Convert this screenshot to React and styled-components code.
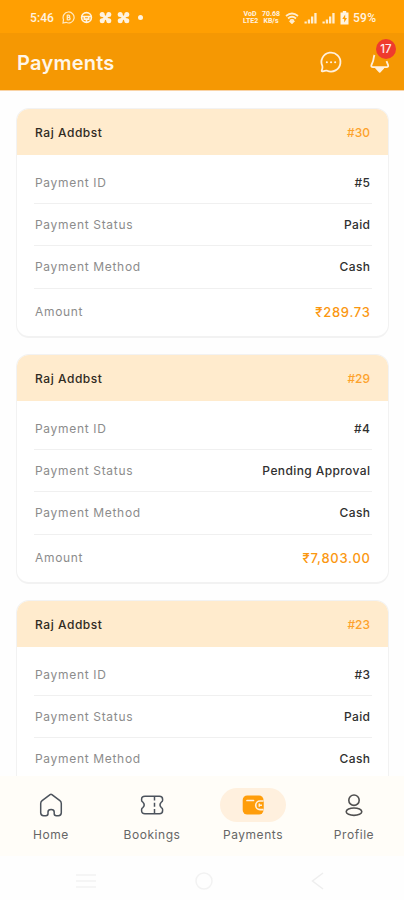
import React from "react";
import styled, { createGlobalStyle } from "styled-components";

const Global = createGlobalStyle`
  * { box-sizing: border-box; }
  body { margin: 0; background: #fefefe; font-family: Inter, "Noto Sans", sans-serif; }
`;

const Screen = styled.div`
  width: 404px;
  height: 900px;
  display: flex;
  flex-direction: column;
  overflow: hidden;
  background: #fefefe;
`;

const StatusBar = styled.div`
  flex: none;
  height: 33px;
  padding: 2px 27px 0 30px;
  display: flex;
  align-items: center;
  justify-content: space-between;
  background: #ff9f02;
  color: #fff3e0;
  font: 500 12px/16px Roboto, sans-serif;
`;

const StatusGroup = styled.div`
  display: flex;
  align-items: center;
  gap: ${(p) => p.$gap}px;
  svg { display: block; flex: none; }
`;

const Clock = styled.span`
  width: 26px;
  letter-spacing: 0.1px;
`;

const Battery = styled.span`
  width: 24px;
  margin-left: -1px;
  letter-spacing: 0.3px;
`;

const TinyStack = styled.span`
  width: ${(p) => p.$width}px;
  font: 700 7px/6.5px Roboto, sans-serif;
  text-align: center;
  white-space: nowrap;
`;

const Dot = styled.i`
  width: 5px;
  height: 5px;
  margin-left: 2px;
  border-radius: 50%;
  background: #fff3e0;
`;

const AppBar = styled.header`
  flex: none;
  height: 58px;
  padding: 1px 12px 0 17px;
  display: flex;
  align-items: center;
  justify-content: space-between;
  background: #f59803;
  border-bottom: 1px solid #f9d3a6;
`;

const Title = styled.h1`
  margin: 2px 0 0;
  color: #fff6e8;
  font-size: 20px;
  line-height: 26px;
  font-weight: 600;
  letter-spacing: 0.25px;
`;

const Actions = styled.div`
  display: flex;
  align-items: center;
  gap: 25px;
  svg { display: block; }
`;

const BellWrap = styled.div`
  position: relative;
  width: 24px;
`;

const CountBadge = styled.span`
  position: absolute;
  top: -11px;
  left: 8px;
  width: 20px;
  height: 20px;
  border-radius: 50%;
  background: #ef3b2d;
  color: #ffeceb;
  font-size: 11.5px;
  line-height: 20px;
  font-weight: 500;
  text-align: center;
`;

const List = styled.main`
  flex: 1;
  min-height: 0;
  overflow: hidden;
  padding: 17px 15px 0 16px;
  display: flex;
  flex-direction: column;
  gap: 16px;
`;

const Card = styled.section`
  flex: none;
  height: 230px;
  border: 1px solid #f2f2f2;
  border-width: 1px 1px 2px;
  border-radius: 13px;
  overflow: hidden;
  background: #fff;
`;

const CardHead = styled.div`
  height: 46px;
  padding: 0 18px;
  display: flex;
  align-items: center;
  justify-content: space-between;
  background: #ffebcd;
`;

const Name = styled.span`
  color: #2f2a22;
  font-size: 12px;
  font-weight: 500;
  letter-spacing: 0.55px;
`;

const Ref = styled.span`
  color: #fda22b;
  font-size: 12px;
  font-weight: 500;
  letter-spacing: 0;
`;

const Rows = styled.div`
  padding: 7px 16px 0 17px;
`;

const Row = styled.div`
  height: ${(p) => (p.$last ? 46 : 42.2)}px;
  padding: 0 2px 0 1px;
  display: flex;
  align-items: center;
  justify-content: space-between;
  border-bottom: ${(p) => (p.$last ? "none" : "1px solid #f0f0f0")};
`;

const Label = styled.span`
  color: #8c8c8c;
  font-size: 12px;
  letter-spacing: 0.68px;
`;

const Value = styled.span`
  color: ${(p) => (p.$amount ? "#fb9710" : "#303030")};
  font-size: ${(p) => (p.$amount ? 13 : 12)}px;
  font-weight: 500;
  letter-spacing: ${(p) => (p.$amount ? 0.75 : 0.4)}px;
  margin-right: ${(p) => (p.$amount ? -0.75 : -0.4)}px;
`;

const BottomNav = styled.nav`
  flex: none;
  height: 80px;
  padding-top: 12px;
  display: grid;
  grid-template-columns: repeat(4, 101px);
  background: #fffdf8;
`;

const NavItem = styled.div`
  display: flex;
  flex-direction: column;
  align-items: center;
  gap: 5px;
  padding-left: 1px;
  color: #666;
  font-size: 12px;
  line-height: 16px;
  letter-spacing: 0.55px;
`;

const NavIcon = styled.span`
  width: 66px;
  height: 34px;
  border-radius: 17px;
  display: grid;
  place-items: center;
  background: ${(p) => (p.$active ? "#fff0de" : "transparent")};
`;

const SystemBar = styled.div`
  flex: none;
  height: 44px;
  padding: 5px 79px 0 76px;
  display: flex;
  align-items: center;
  justify-content: space-between;
  background: #fefefe;
`;

const Clover = () => (
  <svg width="13" height="13" viewBox="0 0 13 13" fill="#fff3e0">
    <circle cx="3.2" cy="3.4" r="2.5" /><circle cx="9.8" cy="3.4" r="2.5" />
    <circle cx="3.2" cy="9.8" r="2.5" /><circle cx="9.8" cy="9.8" r="2.5" />
    <path d="M3 3.5l7 6.5M10 3.5l-7 6.5" stroke="#fff3e0" strokeWidth="3" />
  </svg>
);

const Signal = () => (
  <svg width="13" height="12" viewBox="0 0 13 12" fill="#ffedcf">
    <path d="M.5 9.5h2.300v2H.5zM3.800 7.500h2.300v4H3.800zM7 4.500h2.300v7H7zM10.300 1h2.300v10.500h-2.300z" />
  </svg>
);

const HomeIcon = () => (
  <svg width="24" height="26" viewBox="0 0 24 26" fill="none" stroke="#4c535c" strokeWidth="1.5" strokeLinejoin="round">
    <path d="M11.100 2.700 Q12 2 12.900 2.700 L20.900 8.700 Q22.300 9.800 22.300 11.500 V20.800 Q22.300 23.700 19.400 23.700 H17.300 Q15.200 23.700 15.200 21.800 V20 Q15.200 17.600 12.100 17.600 Q9 17.600 9 20 V21.800 Q9 23.700 6.900 23.700 H4.600 Q1.700 23.700 1.700 20.800 V11.500 Q1.700 9.800 3.100 8.700 Z" />
  </svg>
);

const TicketIcon = () => (
  <svg width="24" height="22" viewBox="0 0 24 22" fill="none" stroke="#4c535c" strokeWidth="1.5" strokeLinejoin="round">
    <path d="M5 2.200 H19.400 Q22.600 2.200 22.600 5.200 V6.200 Q22.600 7.500 21.300 8.200 Q18.700 10.900 21.300 13.600 Q22.600 14.300 22.600 15.600 V16.800 Q22.600 19.800 19.400 19.800 H5 Q1.600 19.800 1.600 16.800 V15.600 Q1.600 14.300 2.900 13.600 Q5.500 10.900 2.900 8.200 Q1.600 7.500 1.600 6.200 V5.200 Q1.600 2.200 5 2.200 Z" />
    <path d="M14.500 2.500v17" strokeDasharray="4 2.300" />
  </svg>
);

const WalletIcon = () => (
  <svg width="22" height="20" viewBox="0 0 22 20">
    <rect x=".7" y=".5" width="20.8" height="19" rx="4.500" fill="#ff9d0a" />
    <path d="M5 5.500h6.500" stroke="#fff0de" strokeWidth="1.700" strokeLinecap="round" />
    <path d="M21.500 6h-3.500a4.300 4.300 0 0 0 0 8.600h3.500" fill="#ff9d0a" stroke="#fff0de" strokeWidth="1.600" />
    <path d="M17.300 8.600v3.200M17.300 10.300h2.700" stroke="#fff0de" strokeWidth="1.500" />
  </svg>
);

const ProfileIcon = () => (
  <svg width="20" height="24" viewBox="0 0 20 24" fill="none" stroke="#505050" strokeWidth="1.600">
    <circle cx="10" cy="7.200" r="5.200" />
    <ellipse cx="10" cy="18.700" rx="7.800" ry="3.700" />
  </svg>
);

const payments = [
  { ref: "#30", id: "#5", status: "Paid", amount: "₹289.73" },
  { ref: "#29", id: "#4", status: "Pending Approval", amount: "₹7,803.00" },
  { ref: "#23", id: "#3", status: "Paid", amount: "" },
];

const tabs = [
  { label: "Home", Icon: HomeIcon },
  { label: "Bookings", Icon: TicketIcon },
  { label: "Payments", Icon: WalletIcon, active: true },
  { label: "Profile", Icon: ProfileIcon },
];

const PaymentCard = ({ payment }) => (
  <Card>
    <CardHead><Name>Raj Addbst</Name><Ref>{payment.ref}</Ref></CardHead>
    <Rows>
      <Row><Label>Payment ID</Label><Value>{payment.id}</Value></Row>
      <Row><Label>Payment Status</Label><Value>{payment.status}</Value></Row>
      <Row><Label>Payment Method</Label><Value>Cash</Value></Row>
      {payment.amount && <Row $last><Label>Amount</Label><Value $amount>{payment.amount}</Value></Row>}
    </Rows>
  </Card>
);

export default function App() {
  return (
    <Screen>
      <Global />
      <StatusBar>
        <StatusGroup $gap={5.5}>
          <Clock>5:46</Clock>
          <svg width="13" height="13" viewBox="0 0 13 13" fill="none" stroke="#ffe9c4">
            <path d="M1 12l.5-3.500a5.500 5.500 0 1 1 2.500 2.800z" strokeWidth="1.200" />
            <path d="M5.300 3.800v5.400M5.300 4.200h1.300a1 1 0 0 1 0 2.200H5.300h1.600a1 1 0 0 1 0 2.400H5.300" strokeWidth="1.300" />
          </svg>
          <svg width="13" height="13" viewBox="0 0 13 13" fill="none" stroke="#fff3e0" strokeWidth="1.600">
            <circle cx="6.500" cy="6.500" r="4.900" /><path d="M2 5.500h9M4.300 5.500v2.600h4.400V5.500M6.500 8v3" />
          </svg>
          <Clover />
          <Clover />
          <Dot />
        </StatusGroup>
        <StatusGroup $gap={5}>
          <TinyStack $width={14}>VoD<br />LTE2</TinyStack>
          <TinyStack $width={18}>70.68<br />KB/s</TinyStack>
          <svg width="14" height="12" viewBox="0 0 14 12" fill="none" stroke="#ffedcf" strokeWidth="1.800">
            <path d="M1 4q6-5 12 0M3 6.500q4-3.400 8 0M5 8.700q2-1.600 4 0" /><path d="M6 10l1 1 1-1z" />
          </svg>
          <Signal />
          <Signal />
          <svg width="9" height="14" viewBox="0 0 9 14">
            <path d="M2.800 0h3.400v1.500H8.500v12H.5v-12h2.300z" fill="#fff3e0" />
            <path d="M5.200 3.500L2.300 8h1.900v3.500L7 7H5.200z" fill="#ff9f02" />
          </svg>
          <Battery>59%</Battery>
        </StatusGroup>
      </StatusBar>
      <AppBar>
        <Title>Payments</Title>
        <Actions>
          <svg width="24" height="24" viewBox="0 0 24 24" fill="none" stroke="#fff0dc" strokeWidth="1.800" strokeLinejoin="round">
            <path d="M3.400 16.200A9.500 9.500 0 1 1 8 20.700Q6.800 20.200 3.700 21.300Q2.300 21.700 2.800 20.300Q3.800 17.500 3.400 16.200Z" />
            <path d="M7.800 12.300h.1M12 12.300h.1M16.100 12.300h.1" strokeWidth="2" strokeLinecap="round" />
          </svg>
          <BellWrap>
            <svg width="24" height="24" viewBox="0 0 24 24" fill="none" stroke="#fff0dc" strokeWidth="1.800" strokeLinejoin="round">
              <path d="M6.500 5C5.500 7 5.700 9.500 4.900 11.500L3.500 14.800C2.900 16.200 3.600 17.200 5 17.200H18.500C19.900 17.200 20.600 16.200 20 14.800L18.500 11.200" />
              <path d="M8 17.800h7.400L11.700 21.800z" fill="#fff0dc" />
            </svg>
            <CountBadge>17</CountBadge>
          </BellWrap>
        </Actions>
      </AppBar>
      <List>{payments.map((p) => <PaymentCard key={p.ref} payment={p} />)}</List>
      <BottomNav>
        {tabs.map(({ label, Icon, active }) => (
          <NavItem key={label}>
            <NavIcon $active={active}><Icon /></NavIcon>
            {label}
          </NavItem>
        ))}
      </BottomNav>
      <SystemBar>
        <svg width="20" height="18" viewBox="0 0 20 18" stroke="#f2f2f2" strokeWidth="1.500"><path d="M0 3h20M0 9h20M0 15h20" /></svg>
        <svg width="18" height="18" viewBox="0 0 18 18" fill="none" stroke="#f2f2f2" strokeWidth="1.500"><circle cx="9" cy="9" r="8" /></svg>
        <svg width="14" height="18" viewBox="0 0 14 18" fill="none" stroke="#eeeeee" strokeWidth="1.500"><path d="M12 1L1.500 9 12 17" /></svg>
      </SystemBar>
    </Screen>
  );
}
